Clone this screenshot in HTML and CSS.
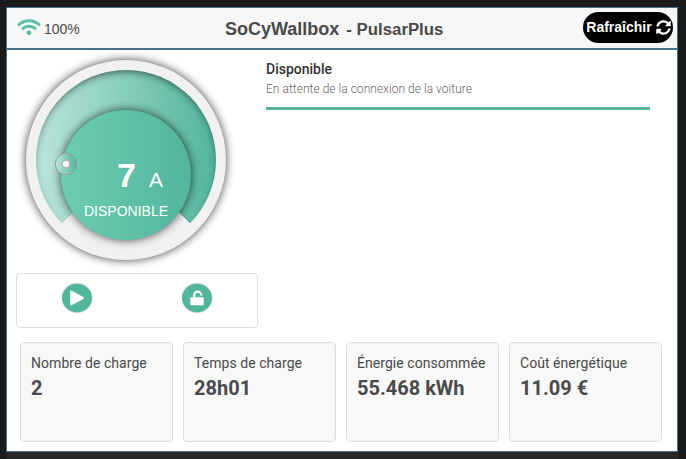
FILE: index.html
```html
<!DOCTYPE html>
<html lang="fr">
<head>
<meta charset="utf-8">
<title>SoCyWallbox</title>
<link rel="stylesheet" href="styles.css">
</head>
<body>
<div class="panel">
  <header class="header">
    <div class="signal">
      <svg width="24" height="18" viewBox="0 0 24 18" fill="none" stroke="#5bbfa5" stroke-width="2.9" stroke-linecap="round">
        <path d="M2 6.600C7.700 1.400 16.300 1.400 22 6.600"/><path d="M5.900 10.400c3.500-2.900 8.700-2.900 12.200 0"/>
        <circle cx="12" cy="14.800" r="2.400" fill="#5bbfa5" stroke="none"/>
      </svg>
      <span>100%</span>
    </div>
    <h1 class="title">SoCyWallbox <small>- PulsarPlus</small></h1>
    <button class="refresh">Rafraîchir
      <svg width="15" height="15" viewBox="0 0 512 512" fill="#fff"><path d="M370.7 133.3C339.500 104 298.900 88 255.800 88c-77.500.1-144.300 53.200-162.800 126.900-1.300 5.400-6.100 9.200-11.700 9.200H24.100c-7.500 0-13.200-6.800-11.800-14.200C33.900 94.900 134.800 8 256 8c66.400 0 126.800 26.100 171.300 68.700L463 41c15.100-15.100 41-4.400 41 17v134c0 13.300-10.700 24-24 24H346c-21.400 0-32.100-25.900-17-41l41.700-41.700zM32 296h134c21.400 0 32.100 25.900 17 41l-41.800 41.800c31.300 29.300 71.800 45.300 114.900 45.300 77.400-.1 144.300-53.100 162.800-126.800 1.300-5.400 6.100-9.200 11.700-9.200h57.300c7.500 0 13.200 6.800 11.800 14.200C478.100 417.100 377.200 504 256 504c-66.400 0-126.800-26.100-171.300-68.700L49 471c-15.100 15.100-41 4.400-41-17V320c0-13.300 10.700-24 24-24z"/></svg>
    </button>
  </header>
  <main class="main">
    <section class="control">
      <div class="gauge">
        <svg class="dial" width="240" height="224" viewBox="0 0 240 224">
          <defs>
            <linearGradient id="arc"><stop offset="0" stop-color="#bae5da"/><stop offset="1" stop-color="#52b59c"/></linearGradient>
            <linearGradient id="disc"><stop offset="0" stop-color="#6dcdb2"/><stop offset="1" stop-color="#52b59c"/></linearGradient>
            <clipPath id="ring"><circle cx="119" cy="110" r="90"/></clipPath>
            <filter id="soft" x="-20%" y="-20%" width="140%" height="140%"><feGaussianBlur stdDeviation="5"/></filter>
          </defs>
          <circle cx="119" cy="110" r="100" fill="#000" opacity=".75" filter="url(#soft)"/>
          <circle cx="119" cy="110" r="100" fill="#f1f1f1"/>
          <circle cx="119" cy="110" r="90" fill="url(#arc)"/>
          <g clip-path="url(#ring)"><circle cx="119" cy="114" r="101" fill="none" stroke="#000" stroke-width="14" opacity=".75" filter="url(#soft)"/></g>
          <path d="M119 110L54.900 174.100A90.600 90.600 0 0 0 183.100 174.100Z" fill="#f1f1f1" stroke="#f1f1f1"/>
          <circle cx="119" cy="125" r="65" fill="#000" opacity=".7" filter="url(#soft)"/>
          <circle cx="119" cy="125" r="65" fill="url(#disc)"/>
          <circle cx="59" cy="114" r="10.700" fill="url(#arc)" stroke="#999" stroke-width="1"/>
          <circle cx="59" cy="114" r="3.800" fill="#fff" stroke="#aaa" stroke-width="1"/>
        </svg>
        <div class="reading"><b>7</b><span>A</span></div>
        <div class="state">DISPONIBLE</div>
      </div>
      <div class="actions">
        <svg class="action" viewBox="0 0 32 32"><circle cx="16" cy="16" r="15.300" fill="#ddd"/><ellipse cx="16" cy="16" rx="15" ry="14.300" fill="#52b69d"/><path d="M9.200 9.700v12.600q0 1.600 1.400.9l11.800-6.300q1.300-.9 0-1.800L10.600 8.800q-1.400-.7-1.400.9Z" fill="#fff"/></svg>
        <svg class="action" viewBox="0 0 32 32"><circle cx="16" cy="16" r="15.300" fill="#ddd"/><ellipse cx="16" cy="16" rx="15" ry="14.300" fill="#52b69d"/><rect x="9.300" y="15.300" width="13.400" height="7.900" rx="1.300" fill="#fff"/><path d="M13.200 16v-2.800a3.500 3.500 0 0 1 7 0v.4" fill="none" stroke="#fff" stroke-width="2.200"/></svg>
      </div>
    </section>
    <section class="status">
      <h2>Disponible</h2>
      <p>En attente de la connexion de la voiture</p>
    </section>
  </main>
  <section class="stats">
    <article class="card"><span>Nombre de charge</span><strong>2</strong></article>
    <article class="card"><span>Temps de charge</span><strong>28h01</strong></article>
    <article class="card"><span>Énergie consommée</span><strong>55.468 kWh</strong></article>
    <article class="card"><span>Coût énergétique</span><strong>11.09 €</strong></article>
  </section>
</div>
</body>
</html>
```

FILE: styles.css
```css
* { box-sizing: border-box; }
body {
  margin: 0;
  height: 459px;
  padding: 7px 8px 0 6px;
  overflow: hidden;
  background: #1a1a1a;
  font-family: Roboto, sans-serif;
  color: #4a4a4a;
}
.panel {
  display: flex;
  flex-direction: column;
  height: 445px;
  background: #fff;
  border: 1px solid #46708f;
  box-shadow: 0 7px 0 #262626;
}
.header {
  display: grid;
  grid-template-columns: 218px 1fr 94px;
  align-items: center;
  height: 42px;
  flex: none;
  background: #f7f7f7;
  border-bottom: 2px solid #46708f;
}
.signal {
  display: flex;
  align-items: center;
  gap: 4px;
  padding: 2px 0 0 9px;
  font: 14px "Liberation Sans", sans-serif;
}
.signal svg { margin: -4px -1px 0 1px; }
.title {
  margin: 2px 0 0;
  font: bold 18px "Liberation Sans", sans-serif;
  white-space: nowrap;
}
.title small { margin-left: 2px; font-size: 16.8px; }
.refresh {
  display: flex;
  align-items: center;
  justify-content: center;
  gap: 4px;
  width: 90px;
  height: 31px;
  padding: 0 0 1px 1px;
  margin-top: -1px;
  border: 0;
  border-radius: 16px;
  background: #000;
  color: #fff;
  font: bold 14px "Liberation Sans", sans-serif;
}
.main { display: flex; height: 278px; flex: none; }
.control { width: 259px; }
.gauge { position: relative; height: 223px; color: #fff; font-family: "Liberation Sans", sans-serif; }
.dial { display: block; }
.reading { position: absolute; left: 110px; top: 105px; line-height: 40px; white-space: nowrap; }
.reading b { font-size: 34px; }
.reading span { margin-left: 13px; font-size: 21px; }
.state { position: absolute; left: 77px; top: 152px; font-size: 14px; line-height: 18px; }
.actions {
  display: flex;
  width: 242px;
  height: 55px;
  margin-left: 9px;
  padding: 8px 0 0 44px;
  gap: 88px;
  border: 1px solid #ddd;
  border-radius: 4px;
}
.action { width: 32px; height: 32px; }
.status { width: 384px; padding-top: 10px; }
.status h2 { margin: 0; font-size: 14px; line-height: 18px; font-weight: 500; color: #333; }
.status p {
  margin: 0;
  height: 32px;
  padding-top: 3px;
  border-bottom: 3px solid #52b69d;
  font-size: 12px;
  line-height: 16px;
  font-weight: 300;
  letter-spacing: .03px;
  color: #666;
}
.stats { display: flex; gap: 10px; padding: 14px 0 0 13px; }
.card {
  display: flex;
  flex-direction: column;
  width: 153px;
  height: 100px;
  padding: 11px 10px;
  background: #f8f8f8;
  border: 1px solid #ddd;
  border-radius: 4px;
  white-space: nowrap;
}
.card span { font-size: 14px; line-height: 18px; letter-spacing: .05px; }
.card strong { margin-top: 4px; font-size: 20px; line-height: 24px; }
```
